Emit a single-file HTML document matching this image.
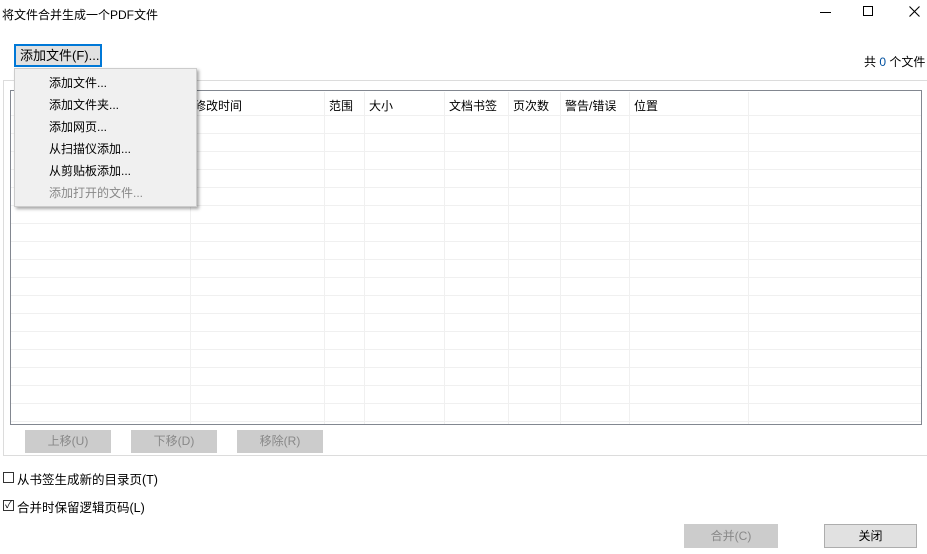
<!DOCTYPE html>
<html><head><meta charset="utf-8"><style>
body{margin:0;width:927px;height:554px;background:#fff;position:relative;overflow:hidden;font-family:"Liberation Sans","Noto Sans CJK SC",sans-serif;font-size:12px;color:#000}
.a{position:absolute}
.btn{position:absolute;background:#ccc;border:1px solid #ccc;color:#888;text-align:center;box-sizing:border-box}
.vl{position:absolute;top:92px;width:1px;height:332px;background:#f0f0f0}
.hl{position:absolute;left:11px;width:910px;height:1px;background:#f0f0f0}
.h{position:absolute;top:97px}
.mi{position:absolute;left:49px}
</style></head><body>
<div class="a" style="left:2px;top:6px">将文件合并生成一个PDF文件</div>
<div class="a" style="left:820px;top:12px;width:11px;height:1px;background:#000"></div>
<div class="a" style="left:863px;top:6px;width:10px;height:10px;border:1px solid #000;box-sizing:border-box"></div>
<svg class="a" style="left:909px;top:6px" width="11" height="11"><path d="M0.5 0.5L10.5 10.5M10.5 0.5L0.5 10.5" stroke="#000" stroke-width="1.1"/></svg>
<div class="a" style="left:864px;top:53px">共 <span style="color:#0050a0">0</span> 个文件</div>
<div class="a" style="left:3px;top:80px;width:924px;height:376px;border:1px solid #dcdcdc;border-right:none;box-sizing:border-box"></div>
<div class="a" style="left:10px;top:90px;width:912px;height:335px;border:1px solid #828790;box-sizing:border-box"></div>
<div class="vl" style="left:190px"></div><div class="vl" style="left:324px"></div><div class="vl" style="left:364px"></div><div class="vl" style="left:444px"></div><div class="vl" style="left:508px"></div><div class="vl" style="left:560px"></div><div class="vl" style="left:629px"></div><div class="vl" style="left:748px"></div>
<div class="hl" style="top:115px"></div><div class="hl" style="top:133px"></div><div class="hl" style="top:151px"></div><div class="hl" style="top:169px"></div><div class="hl" style="top:187px"></div><div class="hl" style="top:205px"></div><div class="hl" style="top:223px"></div><div class="hl" style="top:241px"></div><div class="hl" style="top:259px"></div><div class="hl" style="top:277px"></div><div class="hl" style="top:295px"></div><div class="hl" style="top:313px"></div><div class="hl" style="top:331px"></div><div class="hl" style="top:349px"></div><div class="hl" style="top:367px"></div><div class="hl" style="top:385px"></div><div class="hl" style="top:403px"></div><div class="hl" style="top:421px"></div>
<div class="h" style="left:194px">修改时间</div><div class="h" style="left:329px">范围</div><div class="h" style="left:369px">大小</div><div class="h" style="left:449px">文档书签</div><div class="h" style="left:513px">页次数</div><div class="h" style="left:565px">警告/错误</div><div class="h" style="left:634px">位置</div>
<div class="btn" style="left:25px;top:430px;width:86px;height:23px;line-height:21px">上移(U)</div>
<div class="btn" style="left:131px;top:430px;width:86px;height:23px;line-height:21px">下移(D)</div>
<div class="btn" style="left:237px;top:430px;width:86px;height:23px;line-height:21px">移除(R)</div>
<div class="a" style="left:3px;top:472px;width:11px;height:11px;border:1px solid #333;box-sizing:border-box"></div>
<div class="a" style="left:17px;top:469px;font-size:12.5px">从书签生成新的目录页(T)</div>
<div class="a" style="left:3px;top:500px;width:11px;height:11px;border:1px solid #333;box-sizing:border-box;font-size:10px;line-height:9px;text-align:center">✓</div>
<div class="a" style="left:17px;top:497px;font-size:12.5px">合并时保留逻辑页码(L)</div>
<div class="btn" style="left:684px;top:524px;width:94px;height:24px;line-height:22px">合并(C)</div>
<div class="btn" style="left:824px;top:524px;width:93px;height:24px;line-height:22px;background:#e1e1e1;border-color:#adadad;color:#000">关闭</div>
<div class="a" style="left:14px;top:44px;width:88px;height:23px;border:2px solid #0078d7;background:#e1e1e1;box-sizing:border-box;line-height:19px;padding-left:4px;font-size:13px">添加文件(F)...</div>
<div class="a" style="left:14px;top:68px;width:183px;height:139px;background:#f0f0f0;border:1px solid #ccc;box-sizing:border-box;box-shadow:2px 2px 3px rgba(0,0,0,.35)"></div>
<div class="mi" style="top:74px">添加文件...</div>
<div class="mi" style="top:96px">添加文件夹...</div>
<div class="mi" style="top:118px">添加网页...</div>
<div class="mi" style="top:140px">从扫描仪添加...</div>
<div class="mi" style="top:162px">从剪贴板添加...</div>
<div class="mi" style="top:184px;color:#888">添加打开的文件...</div>
</body></html>
